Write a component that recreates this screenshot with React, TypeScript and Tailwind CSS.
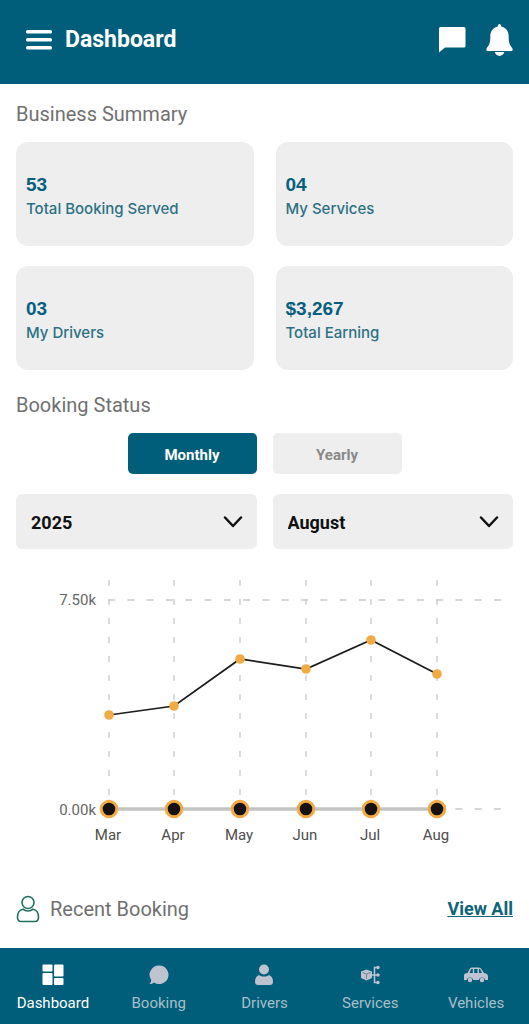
import { useState } from 'react';

const stats = [
  { value: '53', label: 'Total Booking Served' },
  { value: '04', label: 'My Services' },
  { value: '03', label: 'My Drivers' },
  { value: '$3,267', label: 'Total Earning' },
];

const points = [
  { month: 'Mar', x: 93, y: 141 },
  { month: 'Apr', x: 158, y: 132 },
  { month: 'May', x: 224, y: 85 },
  { month: 'Jun', x: 290, y: 95 },
  { month: 'Jul', x: 355, y: 66 },
  { month: 'Aug', x: 421, y: 100 },
];

function MenuIcon() {
  return (
    <svg width="26" height="20" viewBox="0 0 26 20" fill="currentColor" aria-hidden="true">
      <rect width="26" height="3.6" rx="1.5" />
      <rect y="8" width="26" height="3.6" rx="1.5" />
      <rect y="16" width="26" height="3.6" rx="1.5" />
    </svg>
  );
}

function MessageIcon() {
  return (
    <svg width="27" height="26" viewBox="0 0 27 26" fill="currentColor" aria-hidden="true">
      <path d="M1.500 0H25Q26.500 0 26.500 1.500V19Q26.500 20.500 25 20.500H6L0 25.500V1.500Q0 0 1.500 0Z" />
    </svg>
  );
}

function BellIcon() {
  return (
    <svg width="27" height="32" viewBox="0 0 28 33" fill="currentColor" aria-hidden="true">
      <path d="M14 0C15.2 0 15.6 1 15.800 2.500C20.5 3.500 23.500 7.5 23.500 12C23.500 18 24 21 27 24.500C28.400 26.500 27.500 28 25.500 28H2.5C.5 28-.4 26.500 1 24.500C4 21 4.500 18 4.500 12C4.500 7.5 7.5 3.500 12.200 2.500C12.400 1 12.800 0 14 0Z" />
      <path d="M9 29H19C18.500 31.500 16.500 33 14 33S9.500 31.500 9 29Z" />
    </svg>
  );
}

function UserOutline() {
  return (
    <svg width="24" height="28" viewBox="0 0 24 28" fill="none" stroke="currentColor" strokeWidth="1.6" aria-hidden="true">
      <circle cx="12" cy="7.500" r="6" />
      <path d="M7 14.200C3.500 14.600 1.500 18 1.500 22C1.500 25.500 2.500 26.500 5 26.500H19C21.500 26.500 22.500 25.500 22.500 22C22.500 18 20.500 14.600 17 14.200C15.500 15.600 14 16 12 16S8.500 15.600 7 14.200Z" />
    </svg>
  );
}

function GridIcon() {
  return (
    <svg width="22" height="22" viewBox="0 0 22 22" fill="currentColor" aria-hidden="true">
      <rect x="0.500" y="0.500" width="10" height="7" rx="1" />
      <rect x="0.500" y="9" width="10" height="12" rx="1" />
      <rect x="12" y="0.500" width="9.500" height="12" rx="1" />
      <rect x="12" y="14" width="9.500" height="7" rx="1" />
    </svg>
  );
}

function BubbleIcon() {
  return (
    <svg width="22" height="22" viewBox="0 0 22 22" fill="currentColor" aria-hidden="true">
      <path d="M11.500 1.500A9.300 9.300 0 1 1 6 18.500C4.700 19.700 3 20 1.500 20C2.700 18.800 3.200 17.500 3.200 16A9.300 9.300 0 0 1 11.500 1.500Z" />
    </svg>
  );
}

function DriverIcon() {
  return (
    <svg width="22" height="22" viewBox="0 0 22 22" fill="currentColor" aria-hidden="true">
      <circle cx="11" cy="5.500" r="5" />
      <path d="M6 11C8.500 13 13.500 13 16 11C18.500 12 20 14.500 20 17.500C20 20 19 21 17 21H5C3 21 2 20 2 17.500C2 14.500 3.500 12 6 11Z" />
    </svg>
  );
}

function ServicesIcon() {
  return (
    <svg width="22" height="22" viewBox="0 0 22 22" fill="none" stroke="currentColor" strokeWidth="1.500" aria-hidden="true">
      <path fill="currentColor" stroke="none" d="M7.500 5.500L13 7.500V14L7.500 16.500L2 14V7.500Z" />
      <path stroke="#5c7488" strokeWidth="0.800" d="M3.500 8.500L7.500 10L11.500 8.500M7.500 10V15" />
      <path d="M13 11H19M19 3.500H15.500V18.500H19" />
      <g fill="currentColor" stroke="none">
        <circle cx="19" cy="3.500" r="1.700" />
        <circle cx="19" cy="11" r="1.700" />
        <circle cx="19" cy="18.500" r="1.700" />
      </g>
    </svg>
  );
}

function CarIcon() {
  return (
    <svg width="24" height="22" viewBox="0 0 24 22" fill="currentColor" aria-hidden="true">
      <path
        fillRule="evenodd"
        d="M0 16V11.500C0 10 1 9.300 3.500 9L6 4.500Q6.500 3.500 8 3.500H15Q16.500 3.500 17.500 5L20 9C23 9.500 24 10.500 24 12.500V16H21.200A3.300 3.300 0 0 0 14.800 16H9.200A3.300 3.300 0 0 0 2.800 16ZM7.200 5L5.500 9H8.800V5ZM10.200 5V9H13.500V5ZM15 5V9H18L16 5Z"
      />
      <circle cx="6" cy="16" r="2.200" />
      <circle cx="18" cy="16" r="2.200" />
    </svg>
  );
}

const tabs = [
  { name: 'Dashboard', icon: GridIcon },
  { name: 'Booking', icon: BubbleIcon },
  { name: 'Drivers', icon: DriverIcon },
  { name: 'Services', icon: ServicesIcon },
  { name: 'Vehicles', icon: CarIcon },
];

function Dropdown({ label, options }: { label: string; options: string[] }) {
  return (
    <div className="relative">
      <select
        aria-label={label}
        className="h-[55px] w-full appearance-none rounded-md bg-[#eeeeee] px-[15px] pt-[2px] text-lg font-bold text-[#111111]"
      >
        {options.map((option) => (
          <option key={option}>{option}</option>
        ))}
      </select>
      <svg
        className="pointer-events-none absolute top-[22px] right-[14px]"
        width="20"
        height="12"
        viewBox="0 0 20 12"
        fill="none"
        stroke="#111111"
        strokeWidth="2.500"
        strokeLinecap="round"
        strokeLinejoin="round"
        aria-hidden="true"
      >
        <path d="M2 1.500L10 10L18 1.500" />
      </svg>
    </div>
  );
}

function BookingChart() {
  return (
    <svg viewBox="0 0 497 280" className="mt-[25px] block w-full" role="img" aria-label="Bookings by month">
      <g stroke="#c9c9c9" strokeWidth="1.300" fill="none">
        {points.map((p) => (
          <path key={p.month} d={`M${p.x} 6V231`} strokeDasharray="6 13" />
        ))}
        <path d="M92 26H487" strokeDasharray="7 12.300" />
        <path d="M92 235H487" strokeDasharray="7 12.300" />
      </g>
      <path d="M93 235H421" stroke="#c4c4c4" strokeWidth="3.500" />
      <polyline
        points={points.map((p) => `${p.x},${p.y}`).join(' ')}
        fill="none"
        stroke="#1c1c1c"
        strokeWidth="1.700"
      />
      {points.map((p) => (
        <g key={p.month}>
          <circle cx={p.x} cy={p.y} r="4.800" fill="#f0ab45" />
          <circle cx={p.x} cy="235" r="7.800" fill="#15120f" stroke="#f0ab45" strokeWidth="3" />
          <text x={p.x - 1} y="266" textAnchor="middle" fontSize="15" fill="#4d4d4d">
            {p.month}
          </text>
        </g>
      ))}
      <g fontSize="15" fill="#666666" textAnchor="end">
        <text x="80" y="31">7.50k</text>
        <text x="80" y="241">0.00k</text>
      </g>
    </svg>
  );
}

export default function App() {
  const [period, setPeriod] = useState('Monthly');

  return (
    <div className="flex min-h-screen flex-col bg-white font-[Roboto,sans-serif]">
      <header className="flex h-[84px] items-center justify-between bg-[#005e7a] pr-4 pb-1 pl-[26px] text-white">
        <div className="flex items-center gap-[13px]">
          <button aria-label="Open menu">
            <MenuIcon />
          </button>
          <h1 className="text-[23px] leading-8 font-bold">Dashboard</h1>
        </div>
        <div className="flex items-center gap-5">
          <button aria-label="Messages">
            <MessageIcon />
          </button>
          <button aria-label="Notifications">
            <BellIcon />
          </button>
        </div>
      </header>

      <main className="flex-1 px-4 pt-4">
        <h2 className="text-xl leading-7 text-[#707070]">Business Summary</h2>
        <div className="mt-[14px] grid grid-cols-2 gap-x-[22px] gap-y-5">
          {stats.map((stat) => (
            <div key={stat.label} className="flex h-[104px] flex-col justify-center rounded-xl bg-[#eeeeee] px-[10px] pt-[6px]">
              <div className="font-['Liberation_Sans',sans-serif] text-[19px] leading-6 font-bold text-[#075f80]">
                {stat.value}
              </div>
              <div className="font-[Inter,sans-serif] text-[15px] leading-6 font-medium text-[#2d7184]">{stat.label}</div>
            </div>
          ))}
        </div>

        <h2 className="mt-[21px] text-xl leading-7 text-[#707070]">Booking Status</h2>
        <div className="mt-[14px] flex justify-center gap-4">
          {['Monthly', 'Yearly'].map((name) => (
            <button
              key={name}
              onClick={() => setPeriod(name)}
              className={`h-[41px] w-[129px] rounded-[5px] pt-[3px] text-[15px] font-bold ${
                period === name ? 'bg-[#005e7a] text-white' : 'bg-[#eeeeee] text-[#888888]'
              }`}
            >
              {name}
            </button>
          ))}
        </div>
        <div className="mt-5 grid grid-cols-2 gap-4">
          <Dropdown label="Year" options={['2025', '2024', '2023']} />
          <Dropdown label="Month" options={['August', 'July', 'June', 'May', 'April', 'March']} />
        </div>

        <BookingChart />

        <div className="mt-[41px] flex items-center justify-between">
          <div className="flex items-center gap-[10px] text-[#207060]">
            <UserOutline />
            <h2 className="text-xl leading-7 text-[#707070]">Recent Booking</h2>
          </div>
          <a href="#bookings" className="text-lg font-bold text-[#106477] underline">
            View All
          </a>
        </div>
      </main>

      <nav className="grid h-[76px] grid-cols-5 bg-[#005e7a]">
        {tabs.map(({ name, icon: Icon }) => (
          <a
            key={name}
            href={`#${name.toLowerCase()}`}
            className={`flex flex-col items-center pt-4 text-[15px] leading-5 ${
              name === 'Dashboard' ? 'text-white' : 'text-[#a9bec8]'
            }`}
          >
            <span className={name === 'Dashboard' ? 'mb-[7px]' : 'mb-[7px] text-[#bfc3cf]'}>
              <Icon />
            </span>
            {name}
          </a>
        ))}
      </nav>
    </div>
  );
}
